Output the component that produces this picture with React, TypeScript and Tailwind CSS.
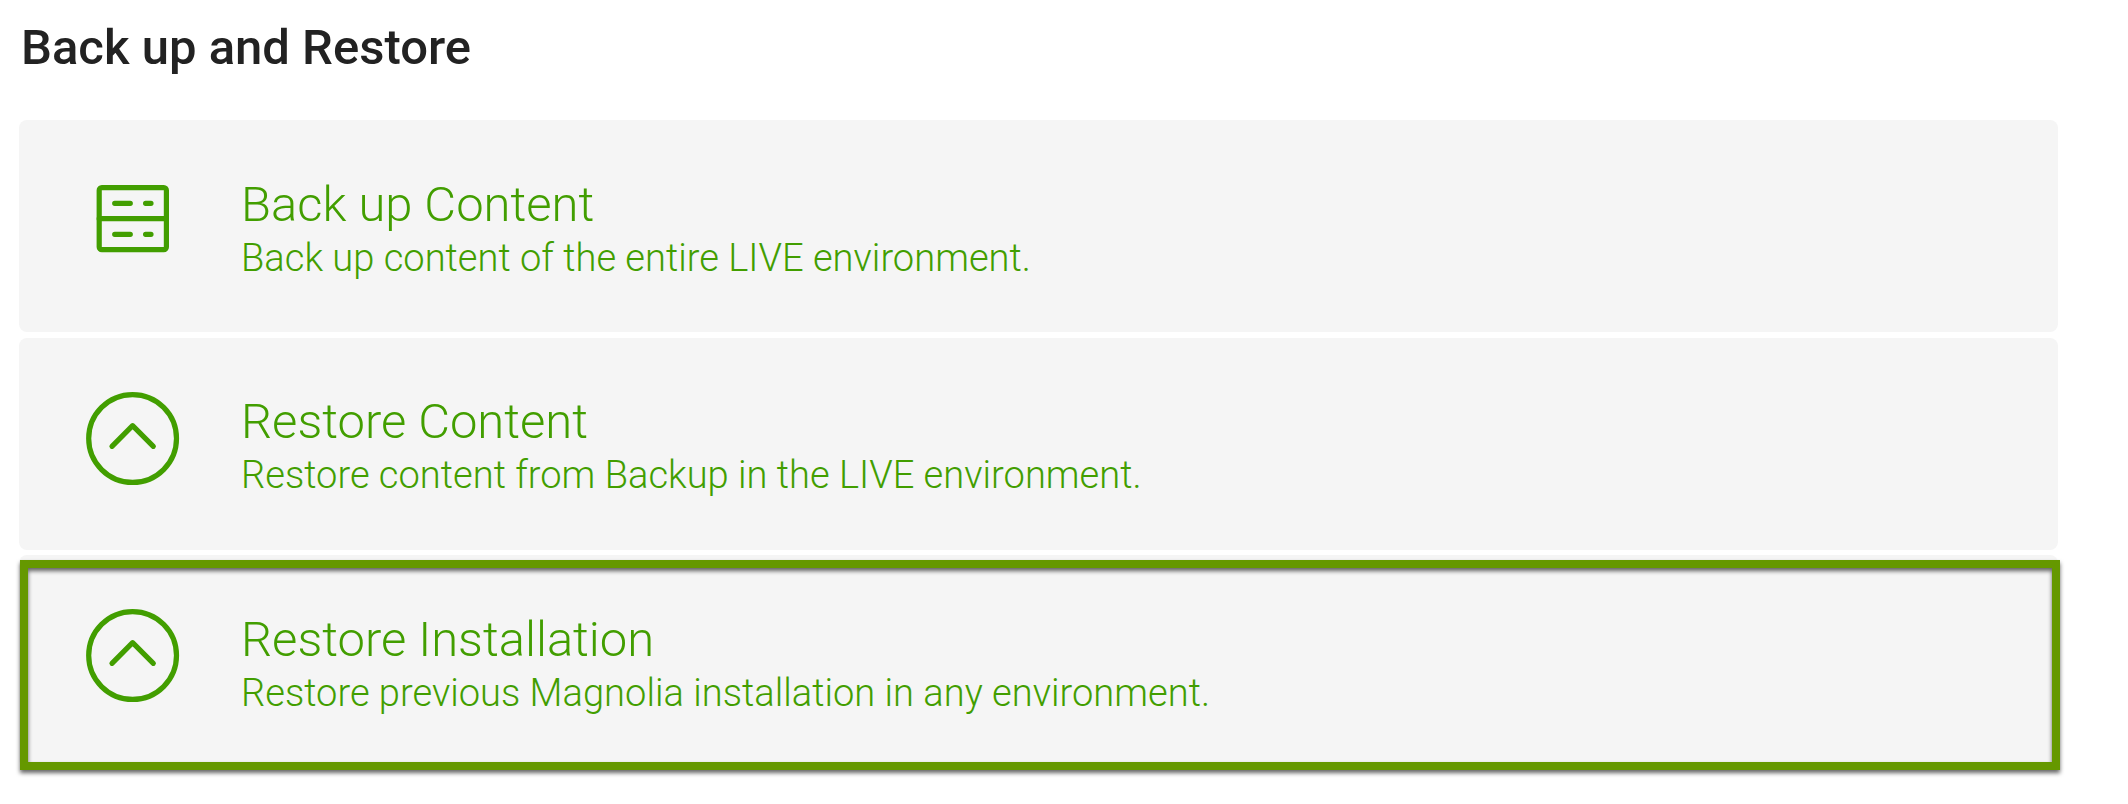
const items = [
  { t: 'Back up Content', d: 'Back up content of the entire LIVE environment.', backup: true, hl: false },
  { t: 'Restore Content', d: 'Restore content from Backup in the LIVE environment.', backup: false, hl: false },
  { t: 'Restore Installation', d: 'Restore previous Magnolia installation in any environment.', backup: false, hl: true },
];

function BackupIcon() {
  return (
    <svg className="h-[100px] w-[100px] shrink-0" viewBox="0 0 100 100" fill="none" stroke="#429e00" strokeWidth="5.2" strokeLinecap="round" strokeLinejoin="round">
      <rect x="15.2" y="17.6" width="67.2" height="62.1" rx="2.6" />
      <path d="M15.2 48.7h67.2M30.7 33.3h15.6M61.6 33.3h5.4M30.7 64.3h15.6M61.6 64.3h5.4" />
    </svg>
  );
}

function RestoreIcon() {
  return (
    <svg className="h-[100px] w-[100px] shrink-0" viewBox="0 0 100 100" fill="none" stroke="#429e00" strokeWidth="5.2" strokeLinecap="round" strokeLinejoin="round">
      <circle cx="48.6" cy="50.5" r="43.9" />
      <path d="M28 58.3L48.6 37.7L69.3 58.3" />
    </svg>
  );
}

export default function App() {
  return (
    <main className="h-[804px] w-[2128px] overflow-hidden bg-white pl-[18.5px] font-['Roboto',sans-serif]">
      <h1 className="h-[120.4px] pt-[15.5px] pl-[2.5px] text-[49px] leading-[64px] font-medium text-[#222222]">Back up and Restore</h1>
      <div className="flex w-[2039.5px] flex-col gap-[5.5px]">
        {items.map((it) => (
          <section key={it.t} className="relative flex h-[212px] items-start rounded-[8px] bg-[#f5f5f5] pt-[49.7px] pl-[65.5px] text-[#429e00]">
            {it.backup ? <BackupIcon /> : <RestoreIcon />}
            <div className="ml-[57px] pt-[1.6px] font-light">
              <h2 className="text-[48.95px] leading-[66px]">{it.t}</h2>
              <p className="text-[38.08px] leading-[40px]">{it.d}</p>
            </div>
            {it.hl && (
              <div className="absolute top-[4.2px] left-[1.5px] h-[210px] w-[2040px] border-[8px] border-[#659800] drop-shadow-[0_3px_2px_rgba(0,0,0,0.6)]" />
            )}
          </section>
        ))}
      </div>
    </main>
  );
}
